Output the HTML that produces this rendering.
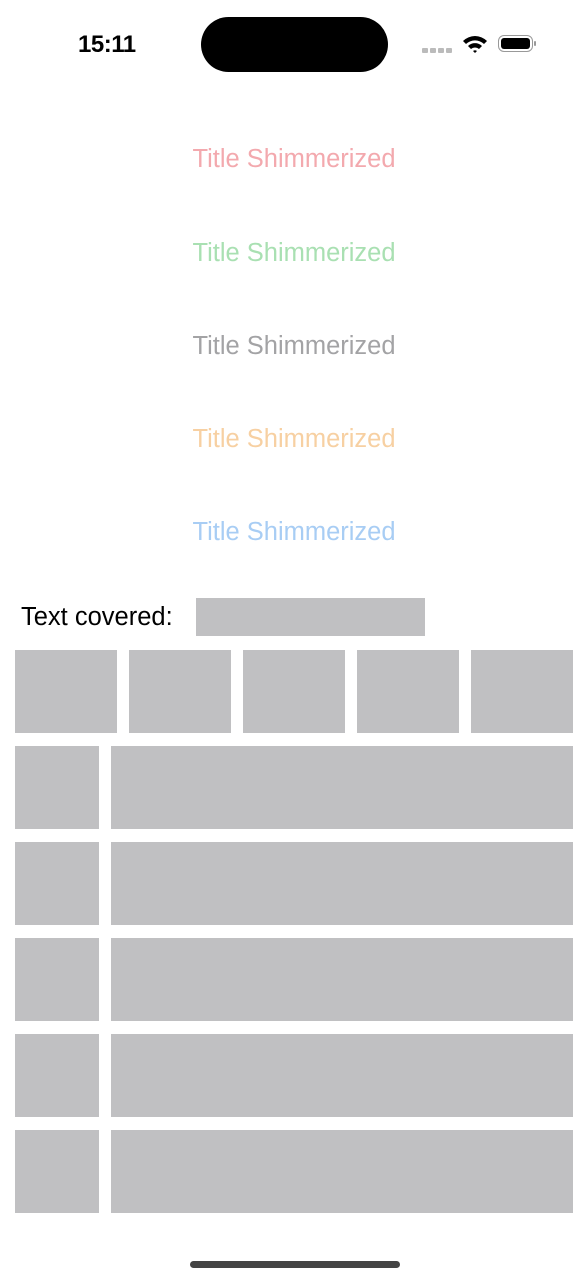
<!DOCTYPE html>
<html><head><style>
body{margin:0;width:588px;height:1280px;background:#fff;position:relative;font-family:"Liberation Sans",sans-serif;overflow:hidden}
.a{position:absolute}
.t{position:absolute;left:0;width:588px;text-align:center;font-size:25.5px;line-height:30px}
.b{position:absolute;background:#c0c0c2}
</style></head><body>
<div class="a" style="left:78px;top:31px;font-size:24px;font-weight:bold;letter-spacing:-0.5px">15:11</div>
<div class="a" style="left:201px;top:17px;width:187px;height:55px;border-radius:28px;background:#000"></div>
<div class="a" style="left:422px;top:48px;width:6px;height:5px;background:#bbb;border-radius:1px;box-shadow:8px 0 #bbb,16px 0 #bbb,24px 0 #bbb"></div>
<svg class="a" style="left:462px;top:34px" width="26" height="20" viewBox="0 0 26 20"><path d="M1 7 A17 17 0 0 1 25 7 L22 10 A13 13 0 0 0 4 10Z M6 12 A10 10 0 0 1 20 12 L17 15 A6 6 0 0 0 9 15Z M11 17 L13 19 L15 17 A3 3 0 0 0 11 17Z" fill="#000"/></svg>
<div class="a" style="left:498px;top:35px;width:35px;height:17px;border:1.5px solid #999;border-radius:6px;box-sizing:border-box"></div>
<div class="a" style="left:501px;top:38px;width:29px;height:11px;background:#000;border-radius:3px"></div>
<div class="a" style="left:534px;top:41px;width:2px;height:5px;background:#999;border-radius:1px"></div>
<div class="t" style="top:144px;color:#f3a9ae">Title Shimmerized</div>
<div class="t" style="top:238px;color:#a9e0b2">Title Shimmerized</div>
<div class="t" style="top:331px;color:#a3a3a5">Title Shimmerized</div>
<div class="t" style="top:424px;color:#f7d0a2">Title Shimmerized</div>
<div class="t" style="top:517px;color:#a8cdf4">Title Shimmerized</div>
<div class="a" style="left:21px;top:603px;font-size:25.5px">Text covered:</div>
<div class="b" style="left:196px;top:598px;width:229px;height:38px"></div>
<div class="b" style="left:15px;top:650px;width:102px;height:83px"></div>
<div class="b" style="left:129px;top:650px;width:102px;height:83px"></div>
<div class="b" style="left:243px;top:650px;width:102px;height:83px"></div>
<div class="b" style="left:357px;top:650px;width:102px;height:83px"></div>
<div class="b" style="left:471px;top:650px;width:102px;height:83px"></div>
<div class="b" style="left:15px;top:746px;width:84px;height:83px"></div><div class="b" style="left:111px;top:746px;width:462px;height:83px"></div>
<div class="b" style="left:15px;top:842px;width:84px;height:83px"></div><div class="b" style="left:111px;top:842px;width:462px;height:83px"></div>
<div class="b" style="left:15px;top:938px;width:84px;height:83px"></div><div class="b" style="left:111px;top:938px;width:462px;height:83px"></div>
<div class="b" style="left:15px;top:1034px;width:84px;height:83px"></div><div class="b" style="left:111px;top:1034px;width:462px;height:83px"></div>
<div class="b" style="left:15px;top:1130px;width:84px;height:83px"></div><div class="b" style="left:111px;top:1130px;width:462px;height:83px"></div>
<div class="a" style="left:190px;top:1261px;width:210px;height:7px;border-radius:4px;background:#444"></div>
</body></html>
